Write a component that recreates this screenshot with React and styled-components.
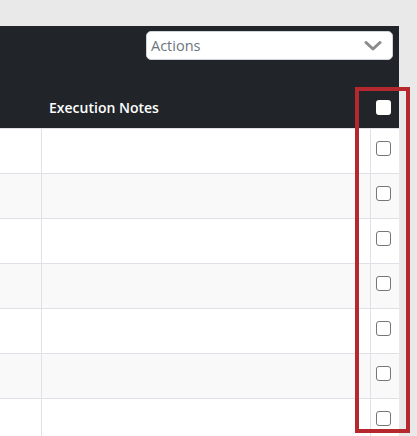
import React from 'react'
import styled, { createGlobalStyle } from 'styled-components'

const GlobalStyle = createGlobalStyle`
  html, body {
    margin: 0;
    padding: 0;
    background: #e9e9e9;
    font-family: "Open Sans", "Liberation Sans", sans-serif;
  }
`

const rows = [0, 1, 2, 3, 4, 5, 6]

const Page = styled.div`
  position: relative;
  width: 417px;
  height: 436px;
  padding-top: 26px;
  box-sizing: border-box;
  overflow: hidden;
`

const Panel = styled.div`
  width: 399px;
  background: #212529;
`

const Toolbar = styled.div`
  height: 61px;
  display: flex;
  justify-content: flex-end;
  align-items: flex-start;
  padding: 5px 6px 0 0;
  box-sizing: border-box;
`

const Select = styled.div`
  width: 247px;
  height: 29px;
  box-sizing: border-box;
  background: #fff;
  border: 1px solid #ced4da;
  border-radius: 5px;
  display: flex;
  align-items: center;
  justify-content: space-between;
  padding: 0 10px 0 4px;
  color: #6c757d;
  font-size: 14.5px;
`

const Grid = styled.div`
  display: grid;
  grid-template-columns: 41px 329px 29px;
`

const HeadCell = styled.div`
  height: 41px;
  display: flex;
  align-items: center;
  padding: 0 0 0 ${p => p.$pad || 0}px;
  color: #fff;
  font-size: 14px;
  font-weight: 600;
  box-sizing: border-box;
`

const Cell = styled.div`
  height: 45px;
  box-sizing: border-box;
  border-top: 1px solid #dee2e6;
  border-left: ${p => (p.$first ? 'none' : '1px solid #dee2e6')};
  background: ${p => (p.$odd ? '#f9f9f9' : '#fff')};
  display: flex;
  align-items: flex-start;
  padding: 12px 0 0 5px;
`

const HeadBox = styled.span`
  width: 15px;
  height: 15px;
  border-radius: 3px;
  background: #fff;
`

const Box = styled.span`
  width: 15px;
  height: 15px;
  box-sizing: border-box;
  border: 1px solid #767676;
  border-radius: 3px;
  background: #fff;
`

const Highlight = styled.div`
  position: absolute;
  left: 355px;
  top: 87px;
  width: 55px;
  height: 346px;
  box-sizing: border-box;
  border: 4px solid #b5282e;
  pointer-events: none;
`

const Chevron = () => (
  <svg width="18" height="12" viewBox="0 0 18 12">
    <path d="M2 2.5 L9 9 L16 2.5" fill="none" stroke="#8a8a8a" strokeWidth="3" strokeLinecap="round" strokeLinejoin="round" />
  </svg>
)

export default function App() {
  return (
    <Page>
      <GlobalStyle />
      <Panel>
        <Toolbar>
          <Select>
            <span>Actions</span>
            <Chevron />
          </Select>
        </Toolbar>
        <Grid>
          <HeadCell />
          <HeadCell $pad={8}>Execution Notes</HeadCell>
          <HeadCell $pad={6}>
            <HeadBox />
          </HeadCell>
          {rows.map(i => (
            <React.Fragment key={i}>
              <Cell $first $odd={i % 2 === 1} />
              <Cell $odd={i % 2 === 1} />
              <Cell $odd={i % 2 === 1}>
                <Box />
              </Cell>
            </React.Fragment>
          ))}
        </Grid>
      </Panel>
      <Highlight />
    </Page>
  )
}
